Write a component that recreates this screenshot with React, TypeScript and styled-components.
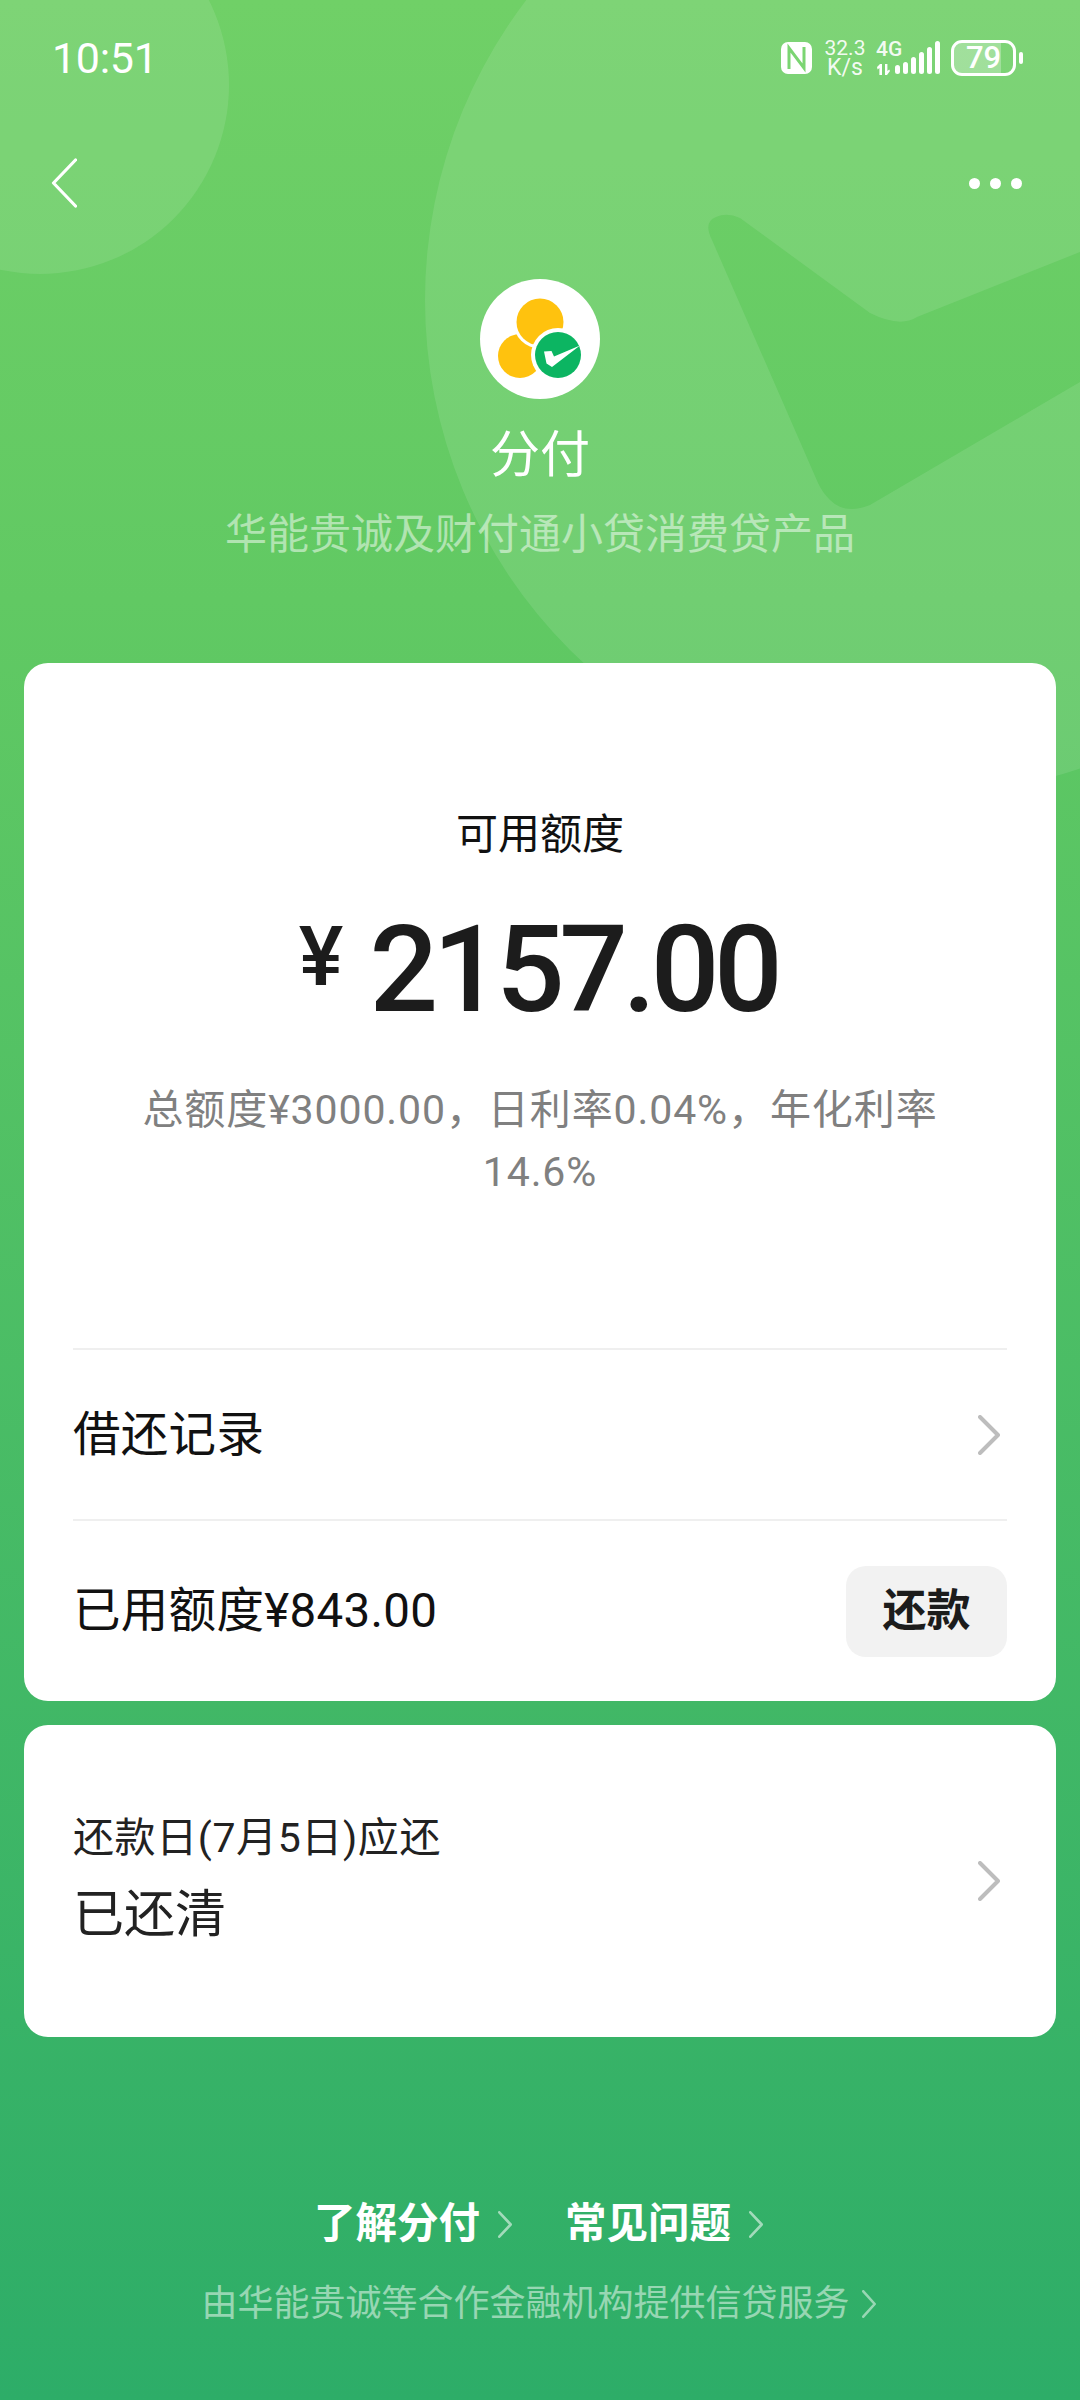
import React from 'react';
import styled, { createGlobalStyle } from 'styled-components';

const Global = createGlobalStyle`
  html, body { margin: 0; padding: 0; }
  body { font-family: Roboto, "Noto Sans CJK SC", sans-serif; }
`;

const Page = styled.div`
  position: relative;
  width: 1080px;
  height: 2400px;
  overflow: hidden;
  background: linear-gradient(180deg, #70d067 0%, #61c963 25%, #2dad68 100%);
  display: flex;
  flex-direction: column;
`;
const Decor = styled.svg`
  position: absolute;
  left: 0;
  top: 0;
`;
const Content = styled.div`
  position: relative;
  display: flex;
  flex-direction: column;
`;
const StatusBar = styled.div`
  height: 116px;
  padding: 0 57px 0 52px;
  display: flex;
  align-items: center;
  justify-content: space-between;
  color: #fff;
`;
const Time = styled.div`
  font-size: 43px;
  line-height: 50px;
  letter-spacing: -0.3px;
`;
const StatusIcons = styled.div`
  display: flex;
  align-items: center;
`;
const Speed = styled.div`
  margin-left: 12px;
  width: 42px;
  display: flex;
  flex-direction: column;
  align-items: center;
  color: rgba(255, 255, 255, 0.92);
`;
const SpeedValue = styled.div`
  font-size: 21px;
  line-height: 18px;
`;
const SpeedUnit = styled.div`
  font-size: 23px;
  line-height: 21px;
`;
const Network = styled.div`
  margin-left: 10px;
  width: 65px;
  height: 34px;
  display: flex;
  justify-content: space-between;
`;
const NetworkLeft = styled.div`
  width: 19px;
  display: flex;
  flex-direction: column;
  justify-content: space-between;
`;
const NetLabel = styled.div`
  font-size: 21px;
  line-height: 17px;
  font-weight: 500;
  color: rgba(255, 255, 255, 0.92);
`;
const NetworkSvg = styled.svg`
  display: block;
  flex: none;
`;
const Battery = styled.div`
  margin-left: 10px;
  box-sizing: border-box;
  width: 65px;
  height: 36px;
  border: 3px solid #fff;
  border-radius: 11px;
  background: linear-gradient(90deg, rgba(255, 255, 255, 0.28) 79%, transparent 79%);
  display: flex;
  align-items: center;
  justify-content: center;
  font-size: 31px;
  line-height: 30px;
  font-weight: 500;
`;
const BatteryNub = styled.div`
  margin-left: 3px;
  width: 4px;
  height: 12px;
  border-radius: 2px;
  background: #fff;
`;
const Nav = styled.div`
  height: 134px;
  padding: 0 58px 0 51px;
  display: flex;
  align-items: center;
  justify-content: space-between;
`;
const Dots = styled.div`
  display: flex;
  gap: 10px;
`;
const Dot = styled.span`
  width: 11px;
  height: 11px;
  border-radius: 50%;
  background: #fff;
`;
const Hero = styled.div`
  display: flex;
  flex-direction: column;
  align-items: center;
  padding-top: 29px;
`;
const HeroTitle = styled.div`
  margin-top: 26px;
  font-size: 50px;
  line-height: 60px;
  color: #fff;
`;
const HeroSub = styled.div`
  margin-top: 20px;
  font-size: 42px;
  line-height: 60px;
  color: rgba(255, 255, 255, 0.5);
`;
const Card = styled.div`
  margin: 0 24px;
  background: #fff;
  border-radius: 24px;
`;
const MainCard = styled(Card)`
  margin-top: 98px;
  padding: 142px 49px 0;
  display: flex;
  flex-direction: column;
`;
const Label = styled.div`
  font-size: 42px;
  line-height: 60px;
  text-align: center;
  color: #111;
`;
const Amount = styled.div`
  margin-top: 40px;
  height: 130px;
  padding-right: 4px;
  display: flex;
  justify-content: center;
  color: #1c1c1c;
  font-weight: 500;
`;
const Yen = styled.span`
  margin: 10px 26px 0 0;
  font-size: 84px;
  line-height: 84px;
`;
const AmountValue = styled.span`
  font-size: 121px;
  line-height: 130px;
  letter-spacing: -5.5px;
`;
const Desc = styled.div`
  margin: 44px 0 0;
  font-size: 41px;
  line-height: 62px;
  text-align: center;
  color: #808080;
  letter-spacing: 0.9px;
`;
const Row = styled.div<{ $h: number }>`
  height: ${(p) => p.$h}px;
  border-top: 2px solid #efefef;
  display: flex;
  align-items: center;
  justify-content: space-between;
  box-sizing: border-box;
`;
const FirstRow = styled(Row)`
  margin-top: 145px;
`;
const RowText = styled.div`
  font-size: 47.5px;
  line-height: 60px;
  letter-spacing: 0.3px;
  color: #111;
`;
const RepayButton = styled.div`
  width: 161px;
  height: 91px;
  border-radius: 20px;
  background: #f2f2f2;
  display: flex;
  align-items: center;
  justify-content: center;
  font-size: 44px;
  line-height: 60px;
  font-weight: 700;
  color: #1c1c1c;
`;
const DueCard = styled(Card)`
  margin-top: 24px;
  height: 312px;
  padding: 0 49px;
  display: flex;
  align-items: center;
  justify-content: space-between;
`;
const DueStack = styled.div`
  margin-bottom: 7px;
  display: flex;
  flex-direction: column;
  gap: 15px;
`;
const DueTitle = styled.div`
  font-size: 41px;
  line-height: 60px;
  letter-spacing: 0.6px;
  color: #222;
`;
const DueValue = styled.div`
  font-size: 51px;
  line-height: 64px;
  color: #222;
`;
const Footer = styled.div`
  margin-top: 157px;
  display: flex;
  flex-direction: column;
  align-items: center;
`;
const FooterLinks = styled.div`
  height: 60px;
  padding-right: 3px;
  display: flex;
  align-items: center;
  gap: 53px;
`;
const FooterLink = styled.div`
  display: flex;
  align-items: center;
  gap: 18px;
  font-size: 41.5px;
  line-height: 60px;
  font-weight: 700;
  color: #fff;
`;
const Provider = styled.div`
  margin-top: 25px;
  height: 50px;
  padding-right: 3px;
  display: flex;
  align-items: center;
  gap: 12px;
  font-size: 36px;
  line-height: 50px;
  color: rgba(255, 255, 255, 0.5);
`;
const ChevronSvg = styled.svg<{ $inset: number }>`
  display: block;
  flex: none;
  margin-right: ${(p) => p.$inset}px;
`;

const Chevron = ({ w, h, color, sw, inset = 0 }: { w: number; h: number; color: string; sw: number; inset?: number }) => (
  <ChevronSvg $inset={inset} width={w} height={h} viewBox={`0 0 ${w} ${h}`} fill="none">
    <path
      d={`M${sw / 2} ${sw / 2} L${w - sw / 2} ${h / 2} L${sw / 2} ${h - sw / 2}`}
      stroke={color}
      strokeWidth={sw}
      strokeLinecap="round"
      strokeLinejoin="round"
    />
  </ChevronSvg>
);

const NfcIcon = () => (
  <svg width="31" height="32" viewBox="0 0 31 32">
    <rect x="0" y="0" width="31" height="32" rx="7" fill="#fff" />
    <path d="M8 27V6L23 26V5" fill="none" stroke="#7bd572" strokeWidth="3" />
  </svg>
);

const Logo = () => (
  <svg width="120" height="120" viewBox="0 0 120 120">
    <circle cx="60" cy="60" r="60" fill="#fff" />
    <circle cx="40" cy="77" r="22" fill="#ffc20e" />
    <circle cx="60" cy="43" r="26.5" fill="#fff" />
    <circle cx="60" cy="43" r="23.5" fill="#ffc20e" />
    <circle cx="78" cy="76" r="27" fill="#fff" />
    <circle cx="78" cy="76" r="23" fill="#0cb562" />
    <path d="M64 72.5L71.5 72 74 77.5 100 66.5 72 88 66.5 84.5Z" fill="#fff" />
  </svg>
);

export default function App() {
  return (
    <Page>
      <Global />
      <Decor width="1080" height="820" viewBox="0 0 1080 820">
        <circle cx="40" cy="85" r="189" fill="#fff" fillOpacity="0.1" />
        <path
          fill="#fff"
          fillOpacity="0.1"
          fillRule="evenodd"
          d="M425 300a495 495 0 1 0 990 0a495 495 0 1 0 -990 0Z M712 240 Q703 222 716 217 Q727 212 740 218 L870 313 Q900 328 917 317 L1080 252 L1080 382 L870 505 Q845 515 830 500 Q822 492 818 483 Z"
        />
      </Decor>
      <Content>
        <StatusBar>
          <Time>10:51</Time>
          <StatusIcons>
            <NfcIcon />
            <Speed>
              <SpeedValue>32.3</SpeedValue>
              <SpeedUnit>K/s</SpeedUnit>
            </Speed>
            <Network>
              <NetworkLeft>
                <NetLabel>4G</NetLabel>
                <NetworkSvg width="17" height="11" viewBox="0 0 17 11" fill="#fff">
                  <path d="M1 3l3-3h2v11H3.4V4L1.6 5.4zM9 0h2.4v7l1.8-1.4.8 1.4-3 4H9z" />
                </NetworkSvg>
              </NetworkLeft>
              <NetworkSvg width="46" height="34" viewBox="0 0 46 34" fill="#fff">
                <rect x="0" y="24" width="5" height="9" rx="2.5" />
                <rect x="8" y="21" width="5" height="12" rx="2.5" />
                <rect x="16" y="16" width="5" height="17" rx="2.5" />
                <rect x="24" y="11" width="5" height="22" rx="2.5" />
                <rect x="32" y="6" width="5" height="27" rx="2.5" />
                <rect x="40" y="0" width="5" height="33" rx="2.5" />
              </NetworkSvg>
            </Network>
            <Battery>79</Battery>
            <BatteryNub />
          </StatusIcons>
        </StatusBar>
        <Nav>
          <svg width="26" height="50" viewBox="0 0 26 50" fill="none">
            <path d="M24.5 2 L2.5 25 L24.5 48" stroke="#fff" strokeWidth="3.2" strokeLinecap="round" strokeLinejoin="round" />
          </svg>
          <Dots>
            <Dot />
            <Dot />
            <Dot />
          </Dots>
        </Nav>
        <Hero>
          <Logo />
          <HeroTitle>分付</HeroTitle>
          <HeroSub>华能贵诚及财付通小贷消费贷产品</HeroSub>
        </Hero>
        <MainCard>
          <Label>可用额度</Label>
          <Amount>
            <Yen>¥</Yen>
            <AmountValue>2157.00</AmountValue>
          </Amount>
          <Desc>
            总额度¥3000.00，日利率0.04%，年化利率
            <br />
            14.6%
          </Desc>
          <FirstRow $h={171}>
            <RowText>借还记录</RowText>
            <Chevron w={22} h={40} color="#bdbdbd" sw={4} inset={7} />
          </FirstRow>
          <Row $h={182}>
            <RowText>已用额度¥843.00</RowText>
            <RepayButton>还款</RepayButton>
          </Row>
        </MainCard>
        <DueCard>
          <DueStack>
            <DueTitle>还款日(7月5日)应还</DueTitle>
            <DueValue>已还清</DueValue>
          </DueStack>
          <Chevron w={22} h={40} color="#bdbdbd" sw={4} inset={7} />
        </DueCard>
        <Footer>
          <FooterLinks>
            <FooterLink>
              了解分付
              <Chevron w={14} h={27} color="rgba(255,255,255,0.55)" sw={2.6} />
            </FooterLink>
            <FooterLink>
              常见问题
              <Chevron w={14} h={27} color="rgba(255,255,255,0.55)" sw={2.6} />
            </FooterLink>
          </FooterLinks>
          <Provider>
            由华能贵诚等合作金融机构提供信贷服务
            <Chevron w={14} h={28} color="rgba(255,255,255,0.5)" sw={2.6} />
          </Provider>
        </Footer>
      </Content>
    </Page>
  );
}
